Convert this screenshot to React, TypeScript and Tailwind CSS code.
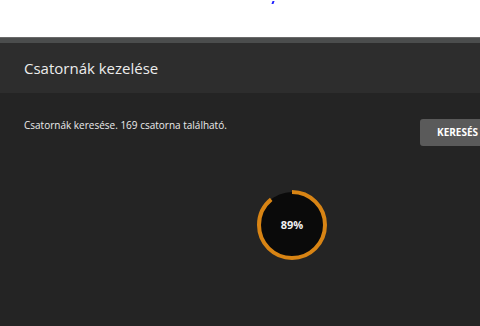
import React from "react";

function Progress({ value }: { value: number }) {
  const r = 33;
  const c = 2 * Math.PI * r;
  return (
    <div className="relative w-[72px] h-[72px]">
      <svg width="72" height="72" viewBox="0 0 72 72" className="absolute inset-0">
        <circle cx="36" cy="36" r="33" fill="#0a0a0a" />
        <circle
          cx="36"
          cy="36"
          r={r}
          fill="none"
          stroke="#d88414"
          strokeWidth="4"
          strokeDasharray={`${(c * value) / 100} ${c}`}
          transform="rotate(-90 36 36)"
        />
      </svg>
      <div className="absolute inset-0 flex items-center justify-center text-[11px] font-bold text-[#f0f0f0]">
        {value}%
      </div>
    </div>
  );
}

export default function App() {
  return (
    <div
      className="w-[480px] h-[326px] overflow-hidden flex flex-col bg-white"
      style={{ fontFamily: '"Open Sans", "Noto Sans", sans-serif' }}
    >
      <div className="h-[37px] shrink-0 bg-white relative">
        <div className="absolute left-[272px] top-[1px] w-[2px] h-[3px] bg-[#2020ff] skew-x-[-20deg]" />
      </div>
      <div className="h-[6px] shrink-0 bg-[#4b4d4d] border-t border-[#6a6a6a]" />
      <div className="h-[50px] shrink-0 bg-[#2d2d2d] flex items-center px-6">
        <h1 className="text-[15px] text-[#ececec] leading-none">Csatornák kezelése</h1>
      </div>
      <div className="flex-1 bg-[#242424] flex flex-col">
        <div className="flex items-start pl-6 pt-[25px]">
          <p className="text-[10px] text-[#ececec] leading-none mt-[2px] flex-1">
            Csatornák keresése. 169 csatorna található.
          </p>
          <div className="w-[60px] overflow-hidden">
            <button className="w-[80px] h-[27px] bg-[#5a5a5a] rounded-[3px] text-left pl-[17px] text-[10px] font-bold text-white">
              KERESÉS
            </button>
          </div>
        </div>
        <div className="flex justify-center mt-[43px] pl-[104px]">
          <Progress value={89} />
        </div>
      </div>
    </div>
  );
}
